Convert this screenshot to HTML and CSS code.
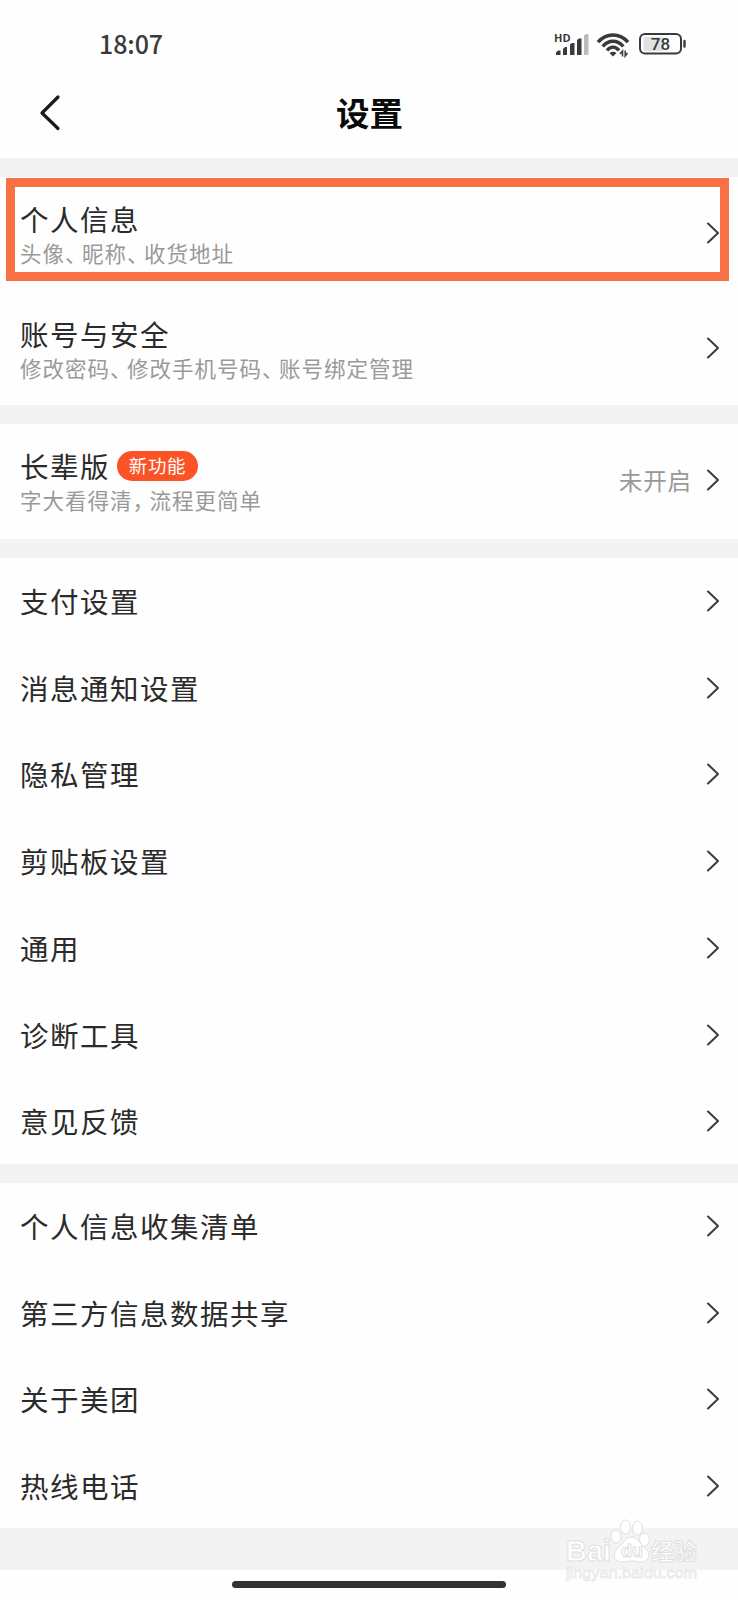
FILE: index.html
```html
<!DOCTYPE html>
<html lang="zh-CN">
<head>
    <meta charset="UTF-8">
    <meta name="viewport" content="width=device-width, initial-scale=1.0">
    <title>设置</title>
    <link rel="stylesheet" href="styles.css">
</head>
<body>
    <div class="status-bar">
        <span class="time">18:07</span>
        <svg class="status-icons" width="136" height="30" viewBox="0 0 136 30">
            <text class="hd" x="0" y="11.500">HD</text>
            <g fill="#3a3a3a">
                <path d="M2 25v-2.500l2-2h2.500V25z"/>
                <path d="M9 25v-6l2-2h2V25z"/>
                <path d="M16 25V14.500l2-1.500h2.500V25z"/>
                <path d="M23 25V10l2-1.500h2.500V25z"/>
            </g>
            <path d="M30 25V5.500l2-1.500h2.500V25z" fill="#bbb"/>
            <g fill="none" stroke="#3a3a3a" stroke-width="3.400">
                <path d="M44 12.200C52 2.500 66 2.500 74 12.200"/>
                <path d="M48.700 16.500C54.500 9.500 63.500 9.500 69.300 16.500"/>
                <path d="M53 20.500C56.500 16 61.500 16 65 20.500"/>
            </g>
            <path d="M55.500 23Q59 20.500 62.500 23L59 26.500z" fill="#3a3a3a"/>
            <path d="M68.500 26.500v-5.500l-2.500 3M71.200 20.500V26l2.300-3" fill="none" stroke="#3a3a3a" stroke-width="1.500"/>
            <rect x="89.500" y="7" width="20" height="14" rx="2" fill="#e1e1e1"/>
            <rect x="86" y="4" width="41" height="19.500" rx="5" fill="none" stroke="#3a3a3a" stroke-width="2"/>
            <path d="M130.500 11v5.500" stroke="#3a3a3a" stroke-width="2.400" stroke-linecap="round"/>
            <text class="battery" x="106.500" y="20" text-anchor="middle">78</text>
        </svg>
    </div>

    <div class="header">
        <svg class="back" width="24" height="38" viewBox="0 0 24 38">
            <path d="M20 3L4 19l16 15.500" fill="none" stroke="#1a1a1a" stroke-width="3.200" stroke-linecap="round" stroke-linejoin="round"/>
        </svg>
        <h1>设置</h1>
    </div>

    <div class="section account">
        <div class="row tall">
            <div class="label">
                <p class="name">个人信息</p>
                <p class="desc">头像<span class="mark">、</span>昵称<span class="mark">、</span>收货地址</p>
            </div>
            <svg class="arrow" viewBox="0 0 14 22"><path d="M2 1.500L12 11 2 20.500"/></svg>
            <div class="highlight"></div>
        </div>
        <div class="row tall">
            <div class="label">
                <p class="name">账号与安全</p>
                <p class="desc">修改密码<span class="mark">、</span>修改手机号码<span class="mark">、</span>账号绑定管理</p>
            </div>
            <svg class="arrow" viewBox="0 0 14 22"><path d="M2 1.500L12 11 2 20.500"/></svg>
        </div>
    </div>

    <div class="section elder">
        <div class="row tall">
            <div class="label">
                <p class="name">长辈版<span class="badge">新功能</span></p>
                <p class="desc">字大看得清<span class="mark">，</span>流程更简单</p>
            </div>
            <span class="state">未开启</span>
            <svg class="arrow" viewBox="0 0 14 22"><path d="M2 1.500L12 11 2 20.500"/></svg>
        </div>
    </div>

    <div class="section general">
        <div class="row"><p class="name">支付设置</p><svg class="arrow" viewBox="0 0 14 22"><path d="M2 1.500L12 11 2 20.500"/></svg></div>
        <div class="row"><p class="name">消息通知设置</p><svg class="arrow" viewBox="0 0 14 22"><path d="M2 1.500L12 11 2 20.500"/></svg></div>
        <div class="row"><p class="name">隐私管理</p><svg class="arrow" viewBox="0 0 14 22"><path d="M2 1.500L12 11 2 20.500"/></svg></div>
        <div class="row"><p class="name">剪贴板设置</p><svg class="arrow" viewBox="0 0 14 22"><path d="M2 1.500L12 11 2 20.500"/></svg></div>
        <div class="row"><p class="name">通用</p><svg class="arrow" viewBox="0 0 14 22"><path d="M2 1.500L12 11 2 20.500"/></svg></div>
        <div class="row"><p class="name">诊断工具</p><svg class="arrow" viewBox="0 0 14 22"><path d="M2 1.500L12 11 2 20.500"/></svg></div>
        <div class="row"><p class="name">意见反馈</p><svg class="arrow" viewBox="0 0 14 22"><path d="M2 1.500L12 11 2 20.500"/></svg></div>
    </div>

    <div class="section about">
        <div class="row"><p class="name">个人信息收集清单</p><svg class="arrow" viewBox="0 0 14 22"><path d="M2 1.500L12 11 2 20.500"/></svg></div>
        <div class="row"><p class="name">第三方信息数据共享</p><svg class="arrow" viewBox="0 0 14 22"><path d="M2 1.500L12 11 2 20.500"/></svg></div>
        <div class="row"><p class="name">关于美团</p><svg class="arrow" viewBox="0 0 14 22"><path d="M2 1.500L12 11 2 20.500"/></svg></div>
        <div class="row"><p class="name">热线电话</p><svg class="arrow" viewBox="0 0 14 22"><path d="M2 1.500L12 11 2 20.500"/></svg></div>
    </div>

    <div class="home-bar"><div class="home-line"></div></div>

    <svg class="watermark" width="140" height="70" viewBox="0 0 140 70">
        <g fill="#fff" stroke="#e0e0e0" stroke-width="1">
            <text class="wm-latin" x="1" y="46" textLength="45" lengthAdjust="spacingAndGlyphs">Bai</text>
            <ellipse cx="51" cy="21.500" rx="5" ry="6.500"/>
            <ellipse cx="60.500" cy="12" rx="5" ry="7"/>
            <ellipse cx="72.500" cy="13" rx="5" ry="7"/>
            <ellipse cx="79.500" cy="24.500" rx="5" ry="6.500"/>
            <path d="M66 22c-6 0-7 6-12 10-6 4-7 14 2 15 5 0 6-1 10-1s6 1 11 1c8-1 9-10 2-15-5-4-6-10-13-10z"/>
            <text class="wm-du" x="56" y="42">du</text>
            <text class="wm-cn" x="86" y="45">经验</text>
            <text class="wm-url" x="1" y="63" textLength="131" lengthAdjust="spacingAndGlyphs">jingyan.baidu.com</text>
        </g>
    </svg>
</body>
</html>
```
FILE: styles.css
```css
* {
    box-sizing: border-box;
    margin: 0;
    padding: 0;
}

body {
    position: relative;
    width: 738px;
    height: 1600px;
    overflow: hidden;
    background: #f3f3f3;
    color: #2b2b2b;
    font-family: "Noto Sans CJK SC", sans-serif;
}

.status-bar {
    display: flex;
    justify-content: space-between;
    height: 78px;
    padding: 29px 48px 0 99px;
    background: #fefefe;
}

.time {
    font-family: "Noto Sans CJK SC", sans-serif;
    font-size: 25px;
    line-height: 28px;
    letter-spacing: -0.100px;
    font-weight: 500;
    color: #3a3a3a;
}

.status-icons {
    margin-top: 1px;
    overflow: visible;
}

.hd {
    font: bold 11px "Open Sans", sans-serif;
    fill: #3a3a3a;
}

.battery {
    font: 500 17px Roboto, sans-serif;
    fill: #3a3a3a;
}

.header {
    display: grid;
    grid-template-columns: 100px 1fr 100px;
    align-items: center;
    height: 80px;
    padding-bottom: 10px;
    background: #fefefe;
}

.back {
    margin-left: 38px;
}

.header h1 {
    margin-top: -2px;
    padding-left: 1px;
    font-size: 33.500px;
    line-height: 40px;
    font-weight: 700;
    text-align: center;
    color: #0a0a0a;
}

.section {
    margin-top: 19px;
    background: #fefefe;
}

.account {
    height: 228px;
}

.elder {
    height: 115px;
}

.general {
    height: 606px;
}

.about {
    height: 345px;
}

.row {
    position: relative;
    display: flex;
    align-items: center;
    height: 86.750px;
    padding: 0 18px 1px 20px;
}

.row.tall {
    height: 115px;
    padding-bottom: 3px;
}

.name {
    display: flex;
    align-items: center;
    height: 38px;
    font-size: 28.500px;
    line-height: 38px;
    letter-spacing: 1.500px;
    white-space: nowrap;
}

.label {
    padding-top: 2px;
}

.desc {
    height: 30px;
    font-size: 21.500px;
    line-height: 30px;
    letter-spacing: 1px;
    white-space: nowrap;
    color: #999;
}

.mark {
    letter-spacing: -4.500px;
}

.badge {
    margin-left: 7px;
    width: 81px;
    height: 30px;
    border-radius: 15px;
    background: #fb5226;
    color: #fff;
    font-size: 18.500px;
    line-height: 29px;
    letter-spacing: 0.700px;
    text-align: center;
}

.arrow {
    flex: none;
    width: 14px;
    height: 22px;
    margin-left: auto;
    fill: none;
    stroke: #3c3c3c;
    stroke-width: 2;
    stroke-linecap: round;
    stroke-linejoin: round;
}

.state {
    margin-left: auto;
    font-size: 23.500px;
    letter-spacing: 0.900px;
    color: #999;
}

.state + .arrow {
    margin-left: 14px;
}

/* orange frame laid over the first row */
.highlight {
    position: absolute;
    left: 6px;
    top: 1px;
    width: 723px;
    height: 103px;
    border: 9px solid #fa7045;
}

.home-bar {
    height: 30px;
    margin-top: 42px;
    padding-top: 11px;
    background: #fefefe;
}

.home-line {
    width: 274px;
    height: 7px;
    margin: 0 auto;
    border-radius: 4px;
    background: #333;
}

.watermark {
    position: absolute;
    left: 565px;
    top: 1515px;
}

.wm-latin {
    font: bold 30px "Liberation Sans", sans-serif;
}

.wm-du {
    font: bold 18px "Liberation Sans", sans-serif;
}

.wm-cn {
    font: bold 23px "Noto Sans CJK SC", sans-serif;
}

.wm-url {
    font: 15px "Liberation Sans", sans-serif;
    stroke: #e8e8e8;
    stroke-width: 0.800px;
}
```
